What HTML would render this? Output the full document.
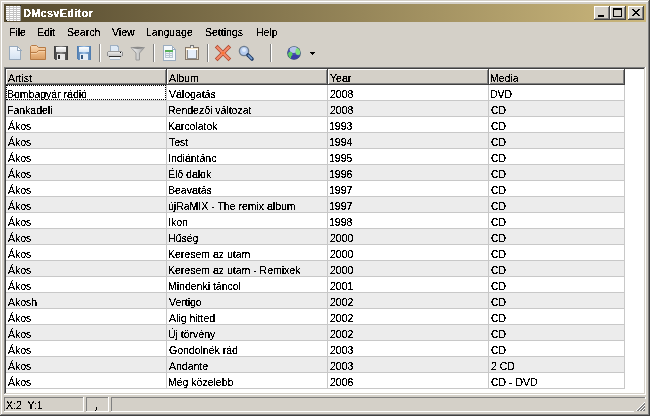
<!DOCTYPE html><html><head><meta charset="utf-8"><style>
*{margin:0;padding:0;box-sizing:border-box}
html,body{width:650px;height:416px;overflow:hidden;background:#d4d0c8;font-family:"Liberation Sans",sans-serif;font-size:10.5px;color:#000}
div,span{position:absolute}
.t{white-space:nowrap;line-height:16px;height:16px;filter:url(#th)}
svg{position:absolute;overflow:visible}
</style></head><body>
<svg width="0" height="0" style="position:absolute"><filter id="th55" x="-5%" y="-5%" width="110%" height="110%"><feComponentTransfer><feFuncA type="discrete" tableValues="0 0 0 0 0 0 1 1 1 1 1"/></feComponentTransfer></filter><filter id="th" x="-5%" y="-5%" width="110%" height="110%"><feComponentTransfer><feFuncA type="discrete" tableValues="0 0 0 0 1 1 1 1 1 1 1"/></feComponentTransfer></filter></svg>
<div style="left:0;top:0;width:650px;height:416px;background:#404040"></div>
<div style="left:0;top:0;width:649px;height:415px;background:#d4d0c8"></div>
<div style="left:1px;top:1px;width:648px;height:414px;background:#808080"></div>
<div style="left:1px;top:1px;width:647px;height:413px;background:#fff"></div>
<div style="left:2px;top:2px;width:646px;height:412px;background:#d4d0c8"></div>
<div style="left:4px;top:4px;width:642px;height:18px;background:linear-gradient(to right,#54492e,#cbb77c)"></div>
<svg style="left:6px;top:5px" width="16" height="16" shape-rendering="crispEdges"><rect x="0" y="1" width="15" height="15" fill="#c4c4c4"/><rect x="0" y="1" width="3" height="1" fill="#fff"/><rect x="0" y="3" width="3" height="1" fill="#fff"/><rect x="0" y="5" width="3" height="1" fill="#fff"/><rect x="0" y="7" width="3" height="1" fill="#fff"/><rect x="0" y="9" width="3" height="1" fill="#fff"/><rect x="0" y="11" width="3" height="1" fill="#fff"/><rect x="0" y="13" width="3" height="1" fill="#fff"/><rect x="0" y="15" width="3" height="1" fill="#fff"/><rect x="4" y="1" width="3" height="1" fill="#fff"/><rect x="4" y="3" width="3" height="1" fill="#fff"/><rect x="4" y="5" width="3" height="1" fill="#fff"/><rect x="4" y="7" width="3" height="1" fill="#fff"/><rect x="4" y="9" width="3" height="1" fill="#fff"/><rect x="4" y="11" width="3" height="1" fill="#fff"/><rect x="4" y="13" width="3" height="1" fill="#fff"/><rect x="4" y="15" width="3" height="1" fill="#fff"/><rect x="8" y="1" width="2" height="1" fill="#fff"/><rect x="8" y="3" width="2" height="1" fill="#fff"/><rect x="8" y="5" width="2" height="1" fill="#fff"/><rect x="8" y="7" width="2" height="1" fill="#fff"/><rect x="8" y="9" width="2" height="1" fill="#fff"/><rect x="8" y="11" width="2" height="1" fill="#fff"/><rect x="8" y="13" width="2" height="1" fill="#fff"/><rect x="8" y="15" width="2" height="1" fill="#fff"/><rect x="11" y="1" width="3" height="1" fill="#fff"/><rect x="11" y="3" width="3" height="1" fill="#fff"/><rect x="11" y="5" width="3" height="1" fill="#fff"/><rect x="11" y="7" width="3" height="1" fill="#fff"/><rect x="11" y="9" width="3" height="1" fill="#fff"/><rect x="11" y="11" width="3" height="1" fill="#fff"/><rect x="11" y="13" width="3" height="1" fill="#fff"/><rect x="11" y="15" width="3" height="1" fill="#fff"/><rect x="14" y="1" width="1" height="15" fill="#a0a0a0"/><rect x="14" y="0" width="1" height="1" fill="#222"/><rect x="0" y="15" width="1" height="1" fill="#222"/></svg>
<div class="t" style="left:23px;top:4px;height:18px;line-height:18px;color:#fff;font-weight:bold;font-size:11px;letter-spacing:0.25px;filter:url(#th)">DMcsvEditor</div>
<div style="left:594px;top:6px;width:16px;height:14px;background:#404040"></div><div style="left:594px;top:6px;width:15px;height:13px;background:#fff"></div><div style="left:595px;top:7px;width:14px;height:12px;background:#808080"></div><div style="left:595px;top:7px;width:13px;height:11px;background:#d4d0c8"></div><div style="left:598px;top:15px;width:6px;height:2px;background:#000"></div>
<div style="left:610px;top:6px;width:16px;height:14px;background:#404040"></div><div style="left:610px;top:6px;width:15px;height:13px;background:#fff"></div><div style="left:611px;top:7px;width:14px;height:12px;background:#808080"></div><div style="left:611px;top:7px;width:13px;height:11px;background:#d4d0c8"></div><div style="left:613px;top:8px;width:9px;height:9px;border:1px solid #000;border-top-width:2px"></div>
<div style="left:628px;top:6px;width:16px;height:14px;background:#404040"></div><div style="left:628px;top:6px;width:15px;height:13px;background:#fff"></div><div style="left:629px;top:7px;width:14px;height:12px;background:#808080"></div><div style="left:629px;top:7px;width:13px;height:11px;background:#d4d0c8"></div><svg style="left:632px;top:9px" width="8" height="7" shape-rendering="crispEdges"><path d="M0 0h2v1h-2zM6 0h2v1h-2zM1 1h2v1h-2zM5 1h2v1h-2zM2 2h4v1h-4zM3 3h2v1h-2zM2 4h4v1h-4zM1 5h2v1h-2zM5 5h2v1h-2zM0 6h2v1h-2zM6 6h2v1h-2z" fill="#000"/></svg>
<div class="t" style="left:9px;top:24px">File</div>
<div class="t" style="left:37px;top:24px">Edit</div>
<div class="t" style="left:67px;top:24px">Search</div>
<div class="t" style="left:112px;top:24px">View</div>
<div class="t" style="left:146px;top:24px">Language</div>
<div class="t" style="left:205px;top:24px">Settings</div>
<div class="t" style="left:256px;top:24px">Help</div>
<div style="left:99px;top:44px;width:1px;height:18px;background:#808080"></div><div style="left:100px;top:44px;width:1px;height:18px;background:#fff"></div>
<div style="left:153px;top:44px;width:1px;height:18px;background:#808080"></div><div style="left:154px;top:44px;width:1px;height:18px;background:#fff"></div>
<div style="left:207px;top:44px;width:1px;height:18px;background:#808080"></div><div style="left:208px;top:44px;width:1px;height:18px;background:#fff"></div>
<div style="left:270px;top:44px;width:1px;height:18px;background:#808080"></div><div style="left:271px;top:44px;width:1px;height:18px;background:#fff"></div>
<svg style="left:7px;top:45px" width="16" height="16" shape-rendering="crispEdges">
<defs><linearGradient id="pg" x1="0" y1="0" x2="0" y2="1"><stop offset="0" stop-color="#f6f9fd"/><stop offset="1" stop-color="#d3e2f2"/></linearGradient></defs>
<path d="M2 1h8l4 4v10h-12z" fill="url(#pg)"/>
<path d="M2.5 1.5h7.5l3.5 3.5v9.5h-11z" fill="none" stroke="#98aabd"/>
<path d="M10 1v4h4z" fill="#fff" stroke="#98aabd"/>
</svg>
<svg style="left:30px;top:45px" width="16" height="16">
<defs><linearGradient id="fd" x1="0" y1="0" x2="0" y2="1"><stop offset="0" stop-color="#f7d8b6"/><stop offset="0.45" stop-color="#eebd8a"/><stop offset="1" stop-color="#d89c62"/></linearGradient></defs>
<path d="M0.5 14.5V1.5L1.5 0.5H6.5L8.5 2.5H15.5V14.5Z" fill="url(#fd)" stroke="#b77b45"/>
<path d="M0.5 7.5H6.5L8.5 5.5H15.5" fill="none" stroke="#b77b45"/>
<path d="M1 8.5H6.8L8.8 6.5H15" fill="none" stroke="#f3cfa6"/>
</svg>
<svg style="left:53px;top:45px" width="16" height="16" shape-rendering="crispEdges">
<defs><linearGradient id="sd" x1="0" y1="0" x2="1" y2="0"><stop offset="0" stop-color="#3a3a3a"/><stop offset="0.5" stop-color="#8a8a8a"/><stop offset="1" stop-color="#3a3a3a"/></linearGradient>
<linearGradient id="sl" x1="0" y1="0" x2="0" y2="1"><stop offset="0" stop-color="#ffffff"/><stop offset="1" stop-color="#dcdcdc"/></linearGradient></defs>
<rect x="1" y="1" width="14" height="14" fill="url(#sd)"/>
<rect x="3" y="2" width="10" height="5" fill="url(#sl)"/>
<rect x="4" y="9" width="8" height="6" fill="#e8e8e8"/>
<rect x="5" y="10" width="2" height="4" fill="#2a2a2a"/>
<rect x="1" y="14" width="1" height="1" fill="#d4d0c8"/>
</svg>
<svg style="left:76px;top:45px" width="16" height="16" shape-rendering="crispEdges">
<defs><linearGradient id="bd" x1="0" y1="0" x2="1" y2="0"><stop offset="0" stop-color="#4b79ad"/><stop offset="0.5" stop-color="#9cc0e6"/><stop offset="1" stop-color="#4b79ad"/></linearGradient>
<linearGradient id="bl2" x1="0" y1="0" x2="0" y2="1"><stop offset="0" stop-color="#ffffff"/><stop offset="1" stop-color="#d6e6f6"/></linearGradient></defs>
<rect x="1" y="1" width="14" height="14" fill="url(#bd)"/>
<rect x="3" y="2" width="10" height="5" fill="url(#bl2)"/>
<rect x="4" y="9" width="8" height="6" fill="#e6eef6"/>
<rect x="5" y="10" width="2" height="4" fill="#34557c"/>
<rect x="1" y="14" width="1" height="1" fill="#d4d0c8"/>
</svg>
<svg style="left:107px;top:45px" width="16" height="16" shape-rendering="crispEdges">
<defs><linearGradient id="pb" x1="0" y1="0" x2="0" y2="1"><stop offset="0" stop-color="#f4f4f4"/><stop offset="1" stop-color="#b8b8b8"/></linearGradient></defs>
<path d="M3 0h7l2 2v4h-9z" fill="#dfeaf6"/>
<path d="M3.5 0.5h6.5l1.5 1.5v4h-8z" fill="none" stroke="#9fb0c2"/>
<rect x="1" y="6" width="14" height="6" fill="url(#pb)"/>
<rect x="0" y="7" width="1" height="4" fill="#8e8e8e"/>
<rect x="15" y="7" width="1" height="4" fill="#8e8e8e"/>
<rect x="1" y="6" width="14" height="1" fill="#9a9a9a"/>
<rect x="2" y="11" width="12" height="1" fill="#2e2e2e"/>
<rect x="3" y="12" width="10" height="3" fill="#eef3f9"/>
<rect x="3" y="14" width="10" height="1" fill="#a9b8c8"/>
<rect x="13" y="7" width="1" height="1" fill="#000"/>
</svg>
<svg style="left:130px;top:45px" width="16" height="16">
<defs><linearGradient id="fu" x1="0" y1="0" x2="1" y2="0"><stop offset="0" stop-color="#f4f4f4"/><stop offset="0.6" stop-color="#c8c8c8"/><stop offset="1" stop-color="#9a9a9a"/></linearGradient></defs>
<path d="M1 2.5h13.5l-5 5.5v7h-3.5v-7z" fill="url(#fu)" stroke="#9a9a9a"/>
<ellipse cx="7.8" cy="2.8" rx="5.2" ry="1.1" fill="#8a8a8a"/>
</svg>
<svg style="left:161px;top:45px" width="16" height="16" shape-rendering="crispEdges">
<path d="M3 1h8l3 3v11h-11z" fill="#f6f9fc"/>
<path d="M2.5 0.5h8l3.5 3.5v11.5h-11z" fill="none" stroke="#9aacbf"/>
<path d="M11 1v3h3z" fill="#fff" stroke="#9aacbf"/>
<rect x="4" y="5" width="8" height="2" fill="#58b158"/>
<rect x="4" y="7" width="8" height="6" fill="#b9c7d4"/>
<rect x="5" y="7" width="3" height="1" fill="#eef3f8"/><rect x="9" y="7" width="2" height="1" fill="#eef3f8"/>
<rect x="5" y="9" width="3" height="1" fill="#eef3f8"/><rect x="9" y="9" width="2" height="1" fill="#eef3f8"/>
<rect x="5" y="11" width="3" height="1" fill="#eef3f8"/><rect x="9" y="11" width="2" height="1" fill="#eef3f8"/>
</svg>
<svg style="left:184px;top:45px" width="16" height="16" shape-rendering="crispEdges">
<rect x="1" y="2" width="14" height="13" fill="#86786a"/>
<rect x="2" y="3" width="12" height="11" fill="#e9dcc8"/>
<rect x="2" y="3" width="12" height="1" fill="#f6e6c8"/>
<rect x="2" y="4" width="12" height="1" fill="#ffffff"/>
<rect x="3" y="5" width="10" height="9" fill="#8c8c8c"/>
<rect x="4" y="5" width="8" height="8" fill="#e6eef9"/>
<rect x="6" y="0" width="4" height="3" fill="#7a7a7a"/>
<rect x="7" y="1" width="2" height="2" fill="#ececec"/>
</svg>
<svg style="left:215px;top:45px" width="16" height="16">
<path d="M2.5 2.5L13.5 13.5M13.5 2.5L2.5 13.5" stroke="#b34a2e" stroke-width="3.8" stroke-linecap="square"/>
<path d="M2.5 2.5L13.5 13.5M13.5 2.5L2.5 13.5" stroke="#f48b6c" stroke-width="2.2" stroke-linecap="square"/>
<circle cx="8" cy="8" r="1.6" fill="#ff7433"/>
</svg>
<svg style="left:238px;top:45px" width="16" height="16">
<circle cx="6" cy="6" r="4.6" fill="#b7cdf0" stroke="#6d7c8e" stroke-width="1.4"/>
<circle cx="6" cy="5" r="2" fill="#dfeafa"/>
<path d="M10 10L14 14" stroke="#1f3b66" stroke-width="3.6" stroke-linecap="round"/>
<path d="M10.3 10.3L13.6 13.6" stroke="#7ea4d6" stroke-width="1.6" stroke-linecap="round"/>
</svg>
<svg style="left:286px;top:45px" width="16" height="16">
<defs><filter id="bl" x="-20%" y="-20%" width="140%" height="140%"><feGaussianBlur stdDeviation="0.55"/></filter><clipPath id="gc"><circle cx="8" cy="8" r="6.3"/></clipPath></defs>
<circle cx="8" cy="8" r="6.8" fill="#2c4f6a"/>
<g clip-path="url(#gc)" filter="url(#bl)">
<rect x="0" y="0" width="16" height="16" fill="#4a4fb0"/>
<ellipse cx="7.5" cy="4.5" rx="3.8" ry="3.4" fill="#b6c3ec"/>
<ellipse cx="12" cy="6.5" rx="2.6" ry="3.6" fill="#7fe07a"/>
<ellipse cx="4.3" cy="10" rx="2.2" ry="3.2" fill="#5ccc5c"/>
<ellipse cx="9" cy="12.5" rx="4" ry="2.8" fill="#3a3ca8"/>
</g>
</svg>
<svg style="left:310px;top:52px" width="5" height="3" shape-rendering="crispEdges">
<path d="M0 0h5v1h-5zM1 1h3v1h-3zM2 2h1v1h-1z" fill="#000"/>
</svg>

<div style="left:4px;top:67px;width:642px;height:328px;background:#fff"></div>
<div style="left:4px;top:67px;width:641px;height:327px;background:#808080"></div>
<div style="left:5px;top:68px;width:640px;height:326px;background:#d4d0c8"></div>
<div style="left:5px;top:68px;width:639px;height:325px;background:#404040"></div>
<div style="left:6px;top:69px;width:638px;height:324px;background:#fff"></div>
<div style="left:6px;top:69px;width:161px;height:16px;background:#404040"></div>
<div style="left:6px;top:69px;width:160px;height:15px;background:#fff"></div>
<div style="left:7px;top:70px;width:159px;height:14px;background:#808080"></div>
<div style="left:7px;top:70px;width:158px;height:13px;background:#d4d0c8"></div>
<div class="t" style="left:8px;top:70px">Artist</div>
<div style="left:167px;top:69px;width:161px;height:16px;background:#404040"></div>
<div style="left:167px;top:69px;width:160px;height:15px;background:#fff"></div>
<div style="left:168px;top:70px;width:159px;height:14px;background:#808080"></div>
<div style="left:168px;top:70px;width:158px;height:13px;background:#d4d0c8"></div>
<div class="t" style="left:169px;top:70px">Album</div>
<div style="left:328px;top:69px;width:161px;height:16px;background:#404040"></div>
<div style="left:328px;top:69px;width:160px;height:15px;background:#fff"></div>
<div style="left:329px;top:70px;width:159px;height:14px;background:#808080"></div>
<div style="left:329px;top:70px;width:158px;height:13px;background:#d4d0c8"></div>
<div class="t" style="left:330px;top:70px">Year</div>
<div style="left:489px;top:69px;width:136px;height:16px;background:#404040"></div>
<div style="left:489px;top:69px;width:135px;height:15px;background:#fff"></div>
<div style="left:490px;top:70px;width:134px;height:14px;background:#808080"></div>
<div style="left:490px;top:70px;width:133px;height:13px;background:#d4d0c8"></div>
<div class="t" style="left:490px;top:70px">Media</div>
<div style="left:6px;top:100px;width:619px;height:1px;background:#c8c8c8"></div>
<div class="t" style="left:7px;top:86px">Bombagyár rádió</div>
<div class="t" style="left:169px;top:86px">Válogatás</div>
<div class="t" style="left:330px;top:86px">2008</div>
<div class="t" style="left:490px;top:86px">DVD</div>
<div style="left:6px;top:101px;width:618px;height:15px;background:#ececec"></div>
<div style="left:6px;top:116px;width:619px;height:1px;background:#c8c8c8"></div>
<div class="t" style="left:7px;top:102px">Fankadeli</div>
<div class="t" style="left:168px;top:102px">Rendezői változat</div>
<div class="t" style="left:330px;top:102px">2008</div>
<div class="t" style="left:491px;top:102px">CD</div>
<div style="left:6px;top:132px;width:619px;height:1px;background:#c8c8c8"></div>
<div class="t" style="left:8px;top:118px">Ákos</div>
<div class="t" style="left:168px;top:118px">Karcolatok</div>
<div class="t" style="left:329px;top:118px">1993</div>
<div class="t" style="left:491px;top:118px">CD</div>
<div style="left:6px;top:133px;width:618px;height:15px;background:#ececec"></div>
<div style="left:6px;top:148px;width:619px;height:1px;background:#c8c8c8"></div>
<div class="t" style="left:8px;top:134px">Ákos</div>
<div class="t" style="left:169px;top:134px">Test</div>
<div class="t" style="left:329px;top:134px">1994</div>
<div class="t" style="left:491px;top:134px">CD</div>
<div style="left:6px;top:164px;width:619px;height:1px;background:#c8c8c8"></div>
<div class="t" style="left:8px;top:150px">Ákos</div>
<div class="t" style="left:168px;top:150px">Indiántánc</div>
<div class="t" style="left:329px;top:150px">1995</div>
<div class="t" style="left:491px;top:150px">CD</div>
<div style="left:6px;top:165px;width:618px;height:15px;background:#ececec"></div>
<div style="left:6px;top:180px;width:619px;height:1px;background:#c8c8c8"></div>
<div class="t" style="left:8px;top:166px">Ákos</div>
<div class="t" style="left:168px;top:166px">Élő dalok</div>
<div class="t" style="left:329px;top:166px">1996</div>
<div class="t" style="left:491px;top:166px">CD</div>
<div style="left:6px;top:196px;width:619px;height:1px;background:#c8c8c8"></div>
<div class="t" style="left:8px;top:182px">Ákos</div>
<div class="t" style="left:168px;top:182px">Beavatás</div>
<div class="t" style="left:329px;top:182px">1997</div>
<div class="t" style="left:491px;top:182px">CD</div>
<div style="left:6px;top:197px;width:618px;height:15px;background:#ececec"></div>
<div style="left:6px;top:212px;width:619px;height:1px;background:#c8c8c8"></div>
<div class="t" style="left:8px;top:198px">Ákos</div>
<div class="t" style="left:168px;top:198px">újRaMIX - The remix album</div>
<div class="t" style="left:329px;top:198px">1997</div>
<div class="t" style="left:491px;top:198px">CD</div>
<div style="left:6px;top:228px;width:619px;height:1px;background:#c8c8c8"></div>
<div class="t" style="left:8px;top:214px">Ákos</div>
<div class="t" style="left:168px;top:214px">Ikon</div>
<div class="t" style="left:329px;top:214px">1998</div>
<div class="t" style="left:491px;top:214px">CD</div>
<div style="left:6px;top:229px;width:618px;height:15px;background:#ececec"></div>
<div style="left:6px;top:244px;width:619px;height:1px;background:#c8c8c8"></div>
<div class="t" style="left:8px;top:230px">Ákos</div>
<div class="t" style="left:168px;top:230px">Hűség</div>
<div class="t" style="left:330px;top:230px">2000</div>
<div class="t" style="left:491px;top:230px">CD</div>
<div style="left:6px;top:260px;width:619px;height:1px;background:#c8c8c8"></div>
<div class="t" style="left:8px;top:246px">Ákos</div>
<div class="t" style="left:168px;top:246px">Keresem az utam</div>
<div class="t" style="left:330px;top:246px">2000</div>
<div class="t" style="left:491px;top:246px">CD</div>
<div style="left:6px;top:261px;width:618px;height:15px;background:#ececec"></div>
<div style="left:6px;top:276px;width:619px;height:1px;background:#c8c8c8"></div>
<div class="t" style="left:8px;top:262px">Ákos</div>
<div class="t" style="left:168px;top:262px">Keresem az utam - Remixek</div>
<div class="t" style="left:330px;top:262px">2000</div>
<div class="t" style="left:491px;top:262px">CD</div>
<div style="left:6px;top:292px;width:619px;height:1px;background:#c8c8c8"></div>
<div class="t" style="left:8px;top:278px">Ákos</div>
<div class="t" style="left:168px;top:278px">Mindenki táncol</div>
<div class="t" style="left:330px;top:278px">2001</div>
<div class="t" style="left:491px;top:278px">CD</div>
<div style="left:6px;top:293px;width:618px;height:15px;background:#ececec"></div>
<div style="left:6px;top:308px;width:619px;height:1px;background:#c8c8c8"></div>
<div class="t" style="left:8px;top:294px">Akosh</div>
<div class="t" style="left:169px;top:294px">Vertigo</div>
<div class="t" style="left:330px;top:294px">2002</div>
<div class="t" style="left:491px;top:294px">CD</div>
<div style="left:6px;top:324px;width:619px;height:1px;background:#c8c8c8"></div>
<div class="t" style="left:8px;top:310px">Ákos</div>
<div class="t" style="left:169px;top:310px">Alig hitted</div>
<div class="t" style="left:330px;top:310px">2002</div>
<div class="t" style="left:491px;top:310px">CD</div>
<div style="left:6px;top:325px;width:618px;height:15px;background:#ececec"></div>
<div style="left:6px;top:340px;width:619px;height:1px;background:#c8c8c8"></div>
<div class="t" style="left:8px;top:326px">Ákos</div>
<div class="t" style="left:168px;top:326px">Új törvény</div>
<div class="t" style="left:330px;top:326px">2002</div>
<div class="t" style="left:491px;top:326px">CD</div>
<div style="left:6px;top:356px;width:619px;height:1px;background:#c8c8c8"></div>
<div class="t" style="left:8px;top:342px">Ákos</div>
<div class="t" style="left:169px;top:342px">Gondolnék rád</div>
<div class="t" style="left:330px;top:342px">2003</div>
<div class="t" style="left:491px;top:342px">CD</div>
<div style="left:6px;top:357px;width:618px;height:15px;background:#ececec"></div>
<div style="left:6px;top:372px;width:619px;height:1px;background:#c8c8c8"></div>
<div class="t" style="left:8px;top:358px">Ákos</div>
<div class="t" style="left:169px;top:358px">Andante</div>
<div class="t" style="left:330px;top:358px">2003</div>
<div class="t" style="left:491px;top:358px">2 CD</div>
<div style="left:6px;top:388px;width:619px;height:1px;background:#c8c8c8"></div>
<div class="t" style="left:8px;top:374px">Ákos</div>
<div class="t" style="left:168px;top:374px">Még közelebb</div>
<div class="t" style="left:330px;top:374px">2006</div>
<div class="t" style="left:491px;top:374px">CD - DVD</div>
<div style="left:166px;top:85px;width:1px;height:304px;background:#c8c8c8"></div>
<div style="left:327px;top:85px;width:1px;height:304px;background:#c8c8c8"></div>
<div style="left:488px;top:85px;width:1px;height:304px;background:#c8c8c8"></div>
<div style="left:624px;top:85px;width:1px;height:304px;background:#c8c8c8"></div>
<div style="left:6px;top:85px;width:160px;height:15px;border:1px dotted #000"></div>
<div style="left:4px;top:397px;width:80px;height:15px;background:#fff"></div><div style="left:4px;top:397px;width:79px;height:14px;background:#808080"></div><div style="left:5px;top:398px;width:78px;height:13px;background:#d4d0c8"></div>
<div style="left:86px;top:397px;width:23px;height:15px;background:#fff"></div><div style="left:86px;top:397px;width:22px;height:14px;background:#808080"></div><div style="left:87px;top:398px;width:21px;height:13px;background:#d4d0c8"></div>
<div style="left:111px;top:397px;width:535px;height:15px;background:#fff"></div><div style="left:111px;top:397px;width:534px;height:14px;background:#808080"></div><div style="left:112px;top:398px;width:533px;height:13px;background:#d4d0c8"></div>
<div class="t" style="left:6px;top:397px">X:2&nbsp; Y:1</div>
<div style="left:96px;top:407px;width:1px;height:3px;background:#000"></div><div style="left:95px;top:410px;width:1px;height:1px;background:#000"></div>
<svg style="left:634px;top:399px" width="12" height="13" shape-rendering="crispEdges"><rect x="0" y="0" width="12" height="13" fill="#d4d0c8"/><rect x="2" y="11" width="1" height="1" fill="#fff"/><rect x="3" y="10" width="1" height="1" fill="#fff"/><rect x="3" y="11" width="1" height="1" fill="#808080"/><rect x="4" y="9" width="1" height="1" fill="#fff"/><rect x="4" y="10" width="1" height="1" fill="#808080"/><rect x="4" y="11" width="1" height="1" fill="#808080"/><rect x="5" y="8" width="1" height="1" fill="#fff"/><rect x="5" y="9" width="1" height="1" fill="#808080"/><rect x="5" y="10" width="1" height="1" fill="#808080"/><rect x="5" y="11" width="1" height="1" fill="#fff"/><rect x="6" y="7" width="1" height="1" fill="#fff"/><rect x="6" y="8" width="1" height="1" fill="#808080"/><rect x="6" y="9" width="1" height="1" fill="#808080"/><rect x="6" y="10" width="1" height="1" fill="#fff"/><rect x="6" y="11" width="1" height="1" fill="#808080"/><rect x="7" y="6" width="1" height="1" fill="#fff"/><rect x="7" y="7" width="1" height="1" fill="#808080"/><rect x="7" y="8" width="1" height="1" fill="#808080"/><rect x="7" y="9" width="1" height="1" fill="#fff"/><rect x="7" y="10" width="1" height="1" fill="#808080"/><rect x="7" y="11" width="1" height="1" fill="#808080"/><rect x="8" y="5" width="1" height="1" fill="#fff"/><rect x="8" y="6" width="1" height="1" fill="#808080"/><rect x="8" y="7" width="1" height="1" fill="#808080"/><rect x="8" y="8" width="1" height="1" fill="#fff"/><rect x="8" y="9" width="1" height="1" fill="#808080"/><rect x="8" y="10" width="1" height="1" fill="#808080"/><rect x="8" y="11" width="1" height="1" fill="#fff"/><rect x="9" y="4" width="1" height="1" fill="#fff"/><rect x="9" y="5" width="1" height="1" fill="#808080"/><rect x="9" y="6" width="1" height="1" fill="#808080"/><rect x="9" y="7" width="1" height="1" fill="#fff"/><rect x="9" y="8" width="1" height="1" fill="#808080"/><rect x="9" y="9" width="1" height="1" fill="#808080"/><rect x="9" y="10" width="1" height="1" fill="#fff"/><rect x="9" y="11" width="1" height="1" fill="#808080"/><rect x="10" y="3" width="1" height="1" fill="#fff"/><rect x="10" y="4" width="1" height="1" fill="#808080"/><rect x="10" y="5" width="1" height="1" fill="#808080"/><rect x="10" y="6" width="1" height="1" fill="#fff"/><rect x="10" y="7" width="1" height="1" fill="#808080"/><rect x="10" y="8" width="1" height="1" fill="#808080"/><rect x="10" y="9" width="1" height="1" fill="#fff"/><rect x="10" y="10" width="1" height="1" fill="#808080"/><rect x="10" y="11" width="1" height="1" fill="#808080"/></svg>
</body></html>
